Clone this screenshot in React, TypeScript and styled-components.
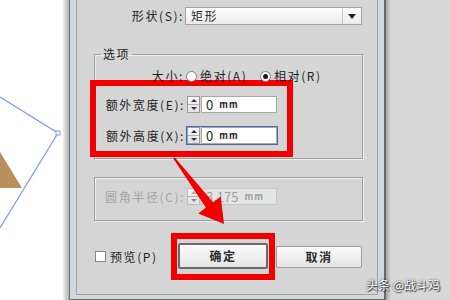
import React from 'react'
import styled, { createGlobalStyle, css } from 'styled-components'

const GlobalStyle = createGlobalStyle`
    html, body {
        margin: 0;
        padding: 0;
    }
    body {
        font-family: "Noto Sans CJK SC", "Noto Sans", sans-serif;
        background: #d8d8d8;
    }
`

const Screen = styled.div`
    position: relative;
    width: 450px;
    height: 300px;
    display: flex;
    overflow: hidden;
    background: #d8d8d8;
`

const Canvas = styled.div`
    flex: none;
    width: 63px;
    height: 100%;
    background: #fff;

    svg {
        display: block;
    }
`

const Shade = styled.div<{ right?: boolean }>`
    flex: none;
    width: 6px;
    background: linear-gradient(to right, #eeeeee, #b2b2b2);

    ${props => props.right && css`
        width: 5px;
        background: linear-gradient(to right, #a4a4a4, #d8d8d8);
    `}
`

const Frame = styled.div`
    flex: none;
    width: 317px;
    height: 300px;
    box-sizing: border-box;
    display: flex;
    flex-direction: column;
    padding: 0 6px 4px;
    border-left: 1px solid #6c6c6c;
    border-right: 2px solid #666;
    border-bottom: 1px solid #6c6c6c;
    background: #d2d8e0;
`

const Body = styled.div`
    flex: 1;
    display: flex;
    flex-direction: column;
    padding-left: 17px;
    border: 1px solid #a2a2a2;
    border-top: none;
    background: #d5d5d5;
    font-size: 12px;
    line-height: 14px;
    letter-spacing: 1.6px;
    color: #1e1e1e;
`

const Row = styled.div<{ top?: number }>`
    display: flex;
    align-items: center;
    margin-top: ${props => props.top ?? 0}px;
`

const Label = styled.span<{ width: number, disabled?: boolean }>`
    flex: none;
    width: ${props => props.width}px;
    text-align: right;
    white-space: nowrap;
    color: ${props => props.disabled ? '#a4a4a4' : '#1e1e1e'};
`

const Select = styled.div`
    margin-left: 3px;
    width: 177px;
    height: 18px;
    box-sizing: border-box;
    display: flex;
    align-items: center;
    border: 1px solid #a4a4a4;
    background: linear-gradient(#fdfdfd, #ebebeb);
`

const SelectText = styled.span`
    flex: 1;
    padding-left: 5px;
`

const SelectArrow = styled.span`
    width: 18px;
    height: 100%;
    display: flex;
    align-items: center;
    justify-content: center;
    border-left: 1px solid #c8c8c8;

    &::after {
        content: '';
        border-left: 4px solid transparent;
        border-right: 4px solid transparent;
        border-top: 5px solid #222;
    }
`

const Group = styled.fieldset`
    width: 269px;
    box-sizing: border-box;
    margin: 0;
    padding: 0 0 1px;
    min-width: 0;
    border: 1px solid #9e9e9e;
    box-shadow: inset 1px 1px 0 #efefef, 1px 1px 0 #efefef;

    legend {
        margin-left: 6px;
        padding: 0 2px;
        line-height: 14px;
    }
`

const Radio = styled.span<{ checked?: boolean }>`
    flex: none;
    width: 11px;
    height: 11px;
    box-sizing: border-box;
    margin-left: 2px;
    border: 1px solid #7c7c7c;
    border-radius: 50%;
    background: #fff;
    display: flex;
    align-items: center;
    justify-content: center;

    ${props => props.checked && css`
        &::after {
            content: '';
            width: 5px;
            height: 5px;
            border-radius: 50%;
            background: #1a1a1a;
        }
    `}
`

const Option = styled.span<{ width?: number }>`
    margin-left: 3px;
    white-space: nowrap;

    ${props => props.width && css`
        flex: none;
        width: ${props.width}px;
    `}
`

const Highlight = styled.div<{ fields?: boolean }>`
    border: 6px solid #f20000;

    ${props => props.fields && css`
        margin: -3px 0 0 -5px;
        width: 191px;
        padding: 0 0 6px;
    `}
`

const FieldBox = styled.div<{ focused?: boolean }>`
    margin-left: 1px;
    width: 92px;
    height: 19px;
    box-sizing: border-box;
    display: flex;
    gap: 1px;
    border: 1px solid ${props => props.focused ? '#4d6aa8' : 'transparent'};
`

const Spinner = styled.div<{ disabled?: boolean }>`
    flex: none;
    width: 13px;
    box-sizing: border-box;
    display: flex;
    flex-direction: column;
    border: 1px solid ${props => props.disabled ? '#bcbcbc' : '#9a9a9a'};
    background: linear-gradient(#f8f8f8, #e2e2e2);

    span {
        flex: 1;
        display: flex;
        align-items: center;
        justify-content: center;
    }

    span + span {
        border-top: 1px solid #b0b0b0;
    }

    span:first-child::after {
        content: '';
        border-left: 3px solid transparent;
        border-right: 3px solid transparent;
        border-bottom: 3px solid ${props => props.disabled ? '#aaa' : '#333'};
    }

    span:last-child::after {
        content: '';
        border-left: 3px solid transparent;
        border-right: 3px solid transparent;
        border-top: 3px solid ${props => props.disabled ? '#888' : '#333'};
    }
`

const Input = styled.div<{ disabled?: boolean }>`
    flex: 1;
    display: flex;
    align-items: center;
    padding-left: 4px;
    border: 1px solid #a8a8a8;
    background: #fff;
    font-size: 13px;
    letter-spacing: 0;
    color: #1e1e1e;

    ${props => props.disabled && css`
        border-color: #c6c6c6;
        background: #e4e4e4;
        color: #a0a0a0;
    `}
`

const Unit = styled.span`
    margin-left: 6px;
    font-size: 9px;
    font-weight: bold;
    letter-spacing: 1px;
`

const Checkbox = styled.span`
    flex: none;
    margin-left: 1px;
    width: 11px;
    height: 11px;
    box-sizing: border-box;
    border: 1px solid #868686;
    background: #fff;
`

const Actions = styled.div`
    display: flex;
    align-items: center;
    gap: 1px;
`

const Button = styled.div<{ primary?: boolean }>`
    width: 86px;
    height: 22px;
    box-sizing: border-box;
    display: flex;
    align-items: center;
    justify-content: center;
    border: 1px solid #9c9c9c;
    border-radius: 2px;
    background: linear-gradient(#fbfbfb, #e4e4e4);
    font-weight: bold;
    color: #2a2a2a;

    ${props => props.primary && css`
        width: 90px;
        height: 26px;
        border: 2px solid #6a6a6a;
    `}
`

const OkWrap = styled(Highlight)`
    padding: 4px 1px 5px;
`

const Overlay = styled.svg`
    position: absolute;
    left: 0;
    top: 0;
    pointer-events: none;
`

const Watermark = styled.div`
    position: absolute;
    right: 10px;
    top: 277px;
    font-size: 12px;
    line-height: 16px;
    color: #fff;
    text-shadow: 0 0 2px #222, 1px 1px 1px #333;
`

const Field = (props: { label: string, value: string, focused?: boolean, disabled?: boolean, top: number, width: number }) => (
    <Row top={props.top}>
        <Label width={props.width} disabled={props.disabled}>{props.label}</Label>
        <FieldBox focused={props.focused}>
            <Spinner disabled={props.disabled}><span /><span /></Spinner>
            <Input disabled={props.disabled}>{props.value}<Unit>mm</Unit></Input>
        </FieldBox>
    </Row>
)

const App = () => {
    return (
        <Screen>
            <GlobalStyle />
            <Canvas>
                <svg width="63" height="300">
                    <polygon points="0,152 22,188 0,188" fill="#b88f5c" />
                    <polyline points="0,97 58,133 0,228" fill="none" stroke="#7f99e6" strokeWidth="1.2" />
                    <rect x="56" y="131" width="4" height="4" fill="#fff" stroke="#7f99e6" strokeWidth="1" />
                </svg>
            </Canvas>
            <Shade />
            <Frame>
                <Body>
                    <Row top={7}>
                        <Label width={90}>形状(S):</Label>
                        <Select style={{ marginLeft: 1 }}>
                            <SelectText>矩形</SelectText>
                            <SelectArrow />
                        </Select>
                    </Row>
                    <Group style={{ marginTop: 22 }}>
                        <legend>选项</legend>
                        <Row top={8}>
                            <Label width={89}>大小:</Label>
                            <Radio />
                            <Option width={58}>绝对(A)</Option>
                            <Radio checked />
                            <Option>相对(R)</Option>
                        </Row>
                        <Highlight fields>
                            <Field top={9} width={89} label="额外宽度(E):" value="0" />
                            <Field top={12} width={89} label="额外高度(X):" value="0" focused />
                        </Highlight>
                    </Group>
                    <Group style={{ marginTop: 18, paddingBottom: 14 }}>
                        <Field top={9} width={90} label="圆角半径(C):" value="3.175" disabled />
                    </Group>
                    <Row top={12}>
                        <Checkbox />
                        <Option width={61} style={{ marginLeft: 4 }}>预览(P)</Option>
                        <Actions>
                            <OkWrap>
                                <Button primary>确定</Button>
                            </OkWrap>
                            <Button>取消</Button>
                        </Actions>
                    </Row>
                </Body>
            </Frame>
            <Shade right />
            <Overlay width="450" height="300">
                <polygon
                    points="174.8,157.4 213.1,202.2 220.7,196.4 224,224 198.3,213.4 205.9,207.6 173.2,158.6"
                    fill="#f20000"
                />
            </Overlay>
            <Watermark>头条 @战斗鸡</Watermark>
        </Screen>
    )
}

export default App
